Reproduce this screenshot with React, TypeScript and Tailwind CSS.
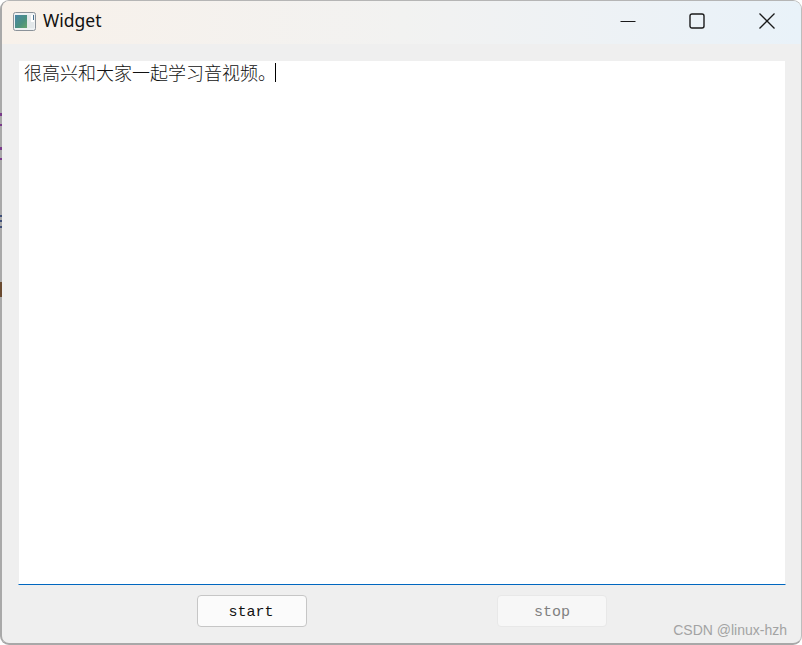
const cjk = "font-['Noto_Sans_CJK_SC','Liberation_Serif',serif]";
const mono = "font-['Liberation_Mono',monospace]";

function AppIcon() {
  return (
    <svg width="23" height="19" viewBox="0 0 23 19" className="shrink-0">
      <defs>
        <linearGradient id="pic" x1="0" y1="0" x2="1" y2="1">
          <stop offset="0" stopColor="#4a86a8" />
          <stop offset="0.6" stopColor="#4a917f" />
          <stop offset="1" stopColor="#68a56c" />
        </linearGradient>
      </defs>
      <rect x="0.5" y="0.5" width="22" height="18" rx="2" fill="#eef1f3" stroke="#8b9299" />
      <rect x="2" y="3" width="12" height="13" fill="url(#pic)" />
      <rect x="14" y="3" width="7" height="13" fill="#e3e8ea" />
      <rect x="18" y="3" width="3" height="7" fill="#ffffff" />
      <rect x="20" y="3" width="1" height="5" fill="#48708f" />
    </svg>
  );
}

function TitleBar() {
  return (
    <div className="flex h-[43px] shrink-0 items-center bg-gradient-to-r from-[#f8f1ea] via-[#f2f2f1] to-[#e9f2f9] pb-[3px]">
      <div className="ml-[11px] flex items-center gap-[7px]">
        <AppIcon />
        <span className="font-['Noto_Sans','Liberation_Sans',sans-serif] text-[17.5px] leading-none text-[#111]">Widget</span>
      </div>
      <div className="ml-auto flex items-center text-[#1a1a1a]">
        <svg width="16" height="16" viewBox="0 0 16 16" className="mr-[53px]">
          <path d="M0.5 8.5H15.5" stroke="currentColor" strokeWidth="1.2" fill="none" />
        </svg>
        <svg width="16" height="16" viewBox="0 0 16 16" className="mr-[54px]">
          <rect x="1" y="1" width="14" height="14" rx="2" stroke="currentColor" strokeWidth="1.4" fill="none" />
        </svg>
        <svg width="16" height="16" viewBox="0 0 16 16" className="mr-[26px]">
          <path d="M0.5 0.5L15.5 15.5M15.5 0.5L0.5 15.5" stroke="currentColor" strokeWidth="1.3" fill="none" />
        </svg>
      </div>
    </div>
  );
}

export default function App() {
  return (
    <div className="relative h-[645px] w-[802px] overflow-hidden bg-white">
      <div className="flex h-full w-full flex-col overflow-hidden rounded-[9px] border-t border-r border-b-2 border-l-2 border-t-[#b5b5b5] border-r-[#bdbdbd] border-b-[#a8a8a8] border-l-[#a9a9a9] bg-[#efefef]">
        <TitleBar />
        <div className="flex flex-1 flex-col pl-[16px] pt-[17px]">
          {/* text edit */}
          <div className="h-[524px] w-[768px] border-x border-b border-x-[#efefef] border-b-[#0067c0] bg-white pl-[5px]">
            <p className={`${cjk} flex items-center text-[18px] leading-[22px] font-light text-[#111]`}>
              很高兴和大家一起学习音视频。
              <span className="-ml-px inline-block h-[19px] w-px bg-black" />
            </p>
          </div>
          {/* buttons */}
          <div className="mt-[10px] flex pl-[179px]">
            <button className={`${mono} h-[32px] w-[110px] rounded-[4px] border border-[#c6c6c6] bg-[#fbfbfb] pt-[5px] pr-[2px] text-[15px] text-[#111]`}>
              start
            </button>
            <button className={`${mono} ml-[190px] h-[32px] w-[110px] rounded-[4px] border border-[#e8e8e8] bg-[#f7f7f7] pt-[5px] text-[15px] text-[#808080]`}>
              stop
            </button>
          </div>
        </div>
      </div>
      {/* bits of the window behind, showing at the left edge */}
      <div className="absolute left-0 top-[113px] h-[3px] w-[2px] bg-[#7a3a8a]" />
      <div className="absolute left-0 top-[124px] h-[2px] w-[2px] bg-[#7a3a8a]" />
      <div className="absolute left-0 top-[147px] h-[3px] w-[2px] bg-[#7a3a8a]" />
      <div className="absolute left-0 top-[158px] h-[2px] w-[2px] bg-[#7a3a8a]" />
      <div className="absolute left-0 top-[215px] h-[2px] w-[2px] bg-[#3f4f78]" />
      <div className="absolute left-0 top-[220px] h-[2px] w-[2px] bg-[#3f4f78]" />
      <div className="absolute left-0 top-[226px] h-[2px] w-[2px] bg-[#3f4f78]" />
      <div className="absolute left-0 top-[282px] h-[15px] w-[2px] bg-[#6a4a30]" />
      <span className="absolute right-[15px] top-[622px] font-['Liberation_Sans',sans-serif] text-[14px] leading-[16px] text-[#a3a3a3]">
        CSDN @linux-hzh
      </span>
    </div>
  );
}
